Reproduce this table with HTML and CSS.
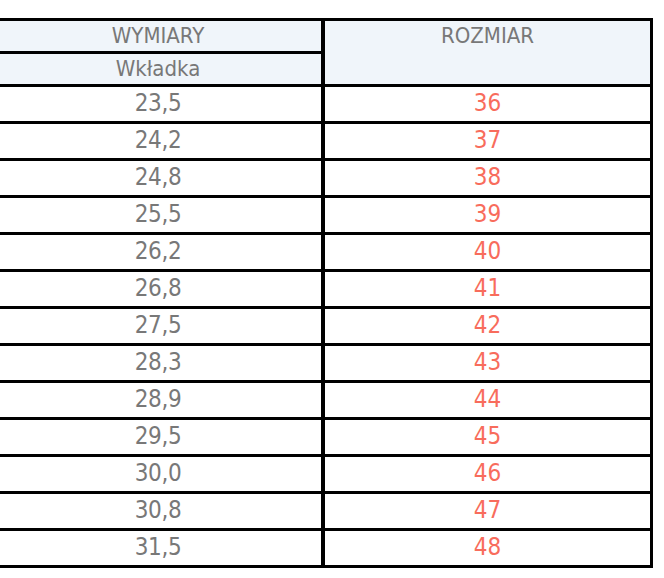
FILE: index.html
```html
<!DOCTYPE html>
<html lang="pl">
<head>
<meta charset="utf-8">
<title>Tabela rozmiarów</title>
<link rel="stylesheet" href="styles.css">
</head>
<body>
<table class="sizes">
  <thead>
    <tr class="head-row">
      <th class="col-dim">WYMIARY</th>
      <th class="col-size" rowspan="2">ROZMIAR</th>
    </tr>
    <tr class="head-row sub">
      <th class="col-dim">Wkładka</th>
    </tr>
  </thead>
  <tbody>
    <tr><td class="col-dim">23,5</td><td class="col-size">36</td></tr>
    <tr><td class="col-dim">24,2</td><td class="col-size">37</td></tr>
    <tr><td class="col-dim">24,8</td><td class="col-size">38</td></tr>
    <tr><td class="col-dim">25,5</td><td class="col-size">39</td></tr>
    <tr><td class="col-dim">26,2</td><td class="col-size">40</td></tr>
    <tr><td class="col-dim">26,8</td><td class="col-size">41</td></tr>
    <tr><td class="col-dim">27,5</td><td class="col-size">42</td></tr>
    <tr><td class="col-dim">28,3</td><td class="col-size">43</td></tr>
    <tr><td class="col-dim">28,9</td><td class="col-size">44</td></tr>
    <tr><td class="col-dim">29,5</td><td class="col-size">45</td></tr>
    <tr><td class="col-dim">30,0</td><td class="col-size">46</td></tr>
    <tr><td class="col-dim">30,8</td><td class="col-size">47</td></tr>
    <tr><td class="col-dim">31,5</td><td class="col-size">48</td></tr>
  </tbody>
</table>
</body>
</html>
```
FILE: styles.css
```css
html, body {
  margin: 0;
  padding: 0;
  background: #ffffff;
}

body {
  padding-top: 18px;
  overflow: hidden;
}

.sizes {
  margin-left: -8px;
  border-collapse: separate;
  border-spacing: 0;
  border: 3px solid #000;
  table-layout: fixed;
  font-family: "DejaVu Sans Condensed", "DejaVu Sans", sans-serif;
  font-size: 24px;
  color: #787878;
}

.sizes th,
.sizes td {
  padding: 0;
  text-align: center;
  font-weight: normal;
  box-sizing: border-box;
}

.sizes .col-dim {
  width: 330px;
  border-right: 4px solid #000;
}

.sizes .col-size {
  width: 325px;
}

.head-row th {
  background: #f0f5fa;
  height: 30px;
  line-height: 29px;
  vertical-align: top;
  font-size: 22px;
}

.head-row.sub th {
  height: 33px;
  border-top: 3px solid #000;
}

.sizes tbody td {
  height: 37px;
  line-height: 33px;
  border-top: 3px solid #000;
  vertical-align: top;
}

.sizes tbody td.col-dim {
  letter-spacing: -0.4px;
}

.sizes tbody td.col-size {
  color: #f86c5c;
}
```
